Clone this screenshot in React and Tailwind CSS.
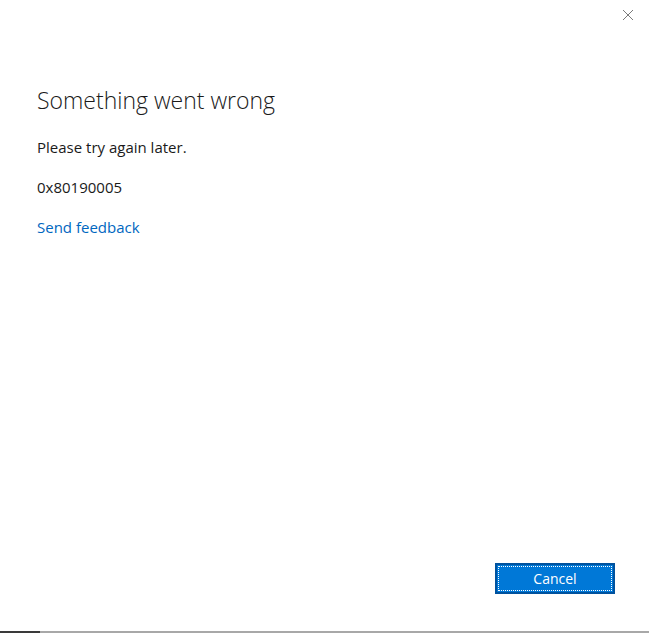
import React from 'react';

const App = () => {
    return (
        <div className="w-[649px] h-[633px] bg-white flex flex-col relative" style={{ fontFamily: '"Open Sans", "Noto Sans", sans-serif' }}>
            <div className="flex justify-end pt-[9px] pr-[15px]">
                <button className="w-[12px] h-[12px] text-[#7a7a7a]" aria-label="Close">
                    <svg viewBox="0 0 12 12" width="12" height="12" stroke="currentColor" strokeWidth="1" fill="none">
                        <path d="M1 1l10 10M11 1L1 11" />
                    </svg>
                </button>
            </div>
            <div className="flex flex-col pl-[37px] pt-[63px] flex-1">
                <h1 className="text-[23px] font-light text-[#1a1a1a] leading-[32px]">Something went wrong</h1>
                <p className="mt-[21px] text-[15px] text-[#1a1a1a] leading-[20px]">Please try again later.</p>
                <p className="mt-[20px] text-[15px] text-[#1a1a1a] leading-[20px]">0x80190005</p>
                <p className="mt-[20px] text-[15px] leading-[20px]">
                    <a href="#" className="text-[#0067c0]">Send feedback</a>
                </p>
            </div>
            <div className="flex justify-end pr-[34px] pb-[37px]">
                <button className="w-[120px] h-[31px] border-2 border-[#00529e] bg-[#0078d7] p-[1px]">
                    <span className="flex items-center justify-center w-full h-full border border-dotted border-white text-white text-[14px]">Cancel</span>
                </button>
            </div>
            <div className="flex h-[2px]">
                <div className="w-[40px] bg-[#3a3a3a]"></div>
                <div className="flex-1 bg-[#a8a8a8]"></div>
            </div>
        </div>
    );
};

export default App;
